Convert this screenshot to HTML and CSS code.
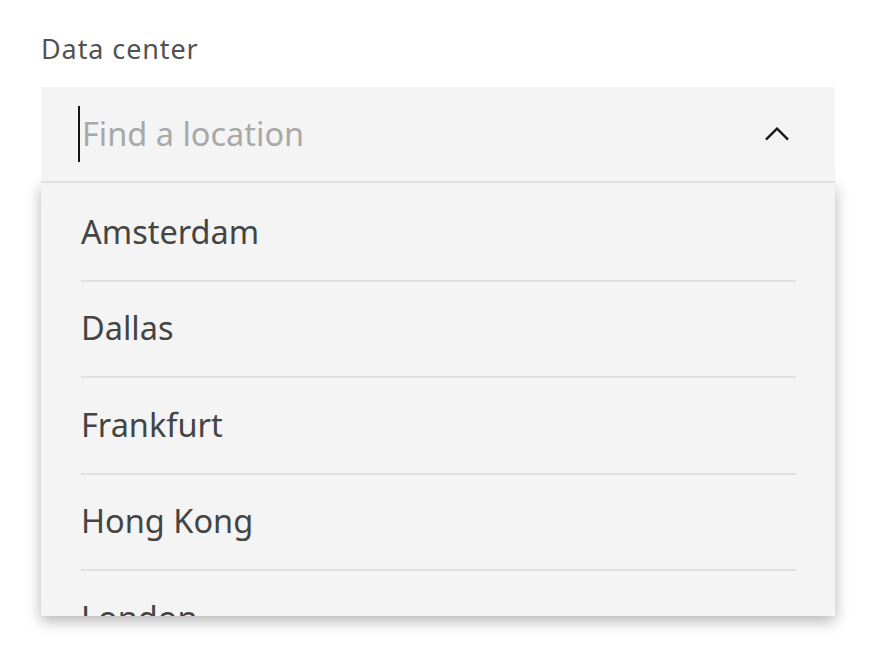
FILE: index.html
```html
<!DOCTYPE html>
<html>
<head>
<meta charset="utf-8">
<link rel="stylesheet" href="styles.css">
</head>
<body>
<div class="wrap">
  <div class="label">Data center</div>
  <div class="combo">
    <div class="field">
      <div class="input"><span class="caret"></span><span class="placeholder">Find a location</span></div>
      <svg class="chevron" width="38" height="38" viewBox="0 0 16 16"><path d="M8 5 13 10 12.3 10.7 8 6.4 3.7 10.7 3 10Z" fill="#161616"/></svg>
    </div>
    <div class="menu">
      <div class="item"><div class="option first">Amsterdam</div></div>
      <div class="item"><div class="option">Dallas</div></div>
      <div class="item"><div class="option">Frankfurt</div></div>
      <div class="item"><div class="option">Hong Kong</div></div>
      <div class="item"><div class="option">London</div></div>
    </div>
  </div>
</div>
</body>
</html>
```

FILE: styles.css
```css
html, body {
  margin: 0;
  padding: 0;
  background: #ffffff;
}
body {
  font-family: "Noto Sans", "Liberation Sans", sans-serif;
  width: 872px;
  height: 656px;
  overflow: hidden;
}
.wrap {
  padding: 30px 37px 0 41px;
  display: flex;
  flex-direction: column;
}
.label {
  font-size: 27px;
  line-height: 38px;
  letter-spacing: 0.9px;
  color: #525252;
  margin-bottom: 19px;
}
.combo {
  width: 794px;
  display: flex;
  flex-direction: column;
}
.field {
  position: relative;
  z-index: 2;
  height: 94px;
  background: #f4f4f4;
  border-bottom: 2px solid #e0e0e0;
  display: flex;
  align-items: center;
  justify-content: space-between;
  padding: 0 39px 0 37px;
}
.input {
  display: flex;
  align-items: center;
  font-size: 32.5px;
  color: #a8a8a8;
  letter-spacing: 0;
}
.caret {
  display: inline-block;
  width: 2px;
  height: 56px;
  background: #161616;
  margin-right: 2px;
}
.placeholder {
  line-height: 56px;
}
.chevron {
  display: block;
}
.menu {
  position: relative;
  z-index: 1;
  height: 433px;
  overflow: hidden;
  background: #f4f4f4;
  box-shadow: 0 5px 14px rgba(0, 0, 0, 0.3);
}
.item {
  height: 96.5px;
  padding: 0 39px 0 40px;
}
.option {
  height: 100%;
  box-sizing: border-box;
  border-top: 2px solid #e0e0e0;
  display: flex;
  align-items: center;
  font-size: 32.5px;
  letter-spacing: 0;
  color: #444444;
  padding-bottom: 2px;
}
.option.first {
  border-top-color: transparent;
}
```
